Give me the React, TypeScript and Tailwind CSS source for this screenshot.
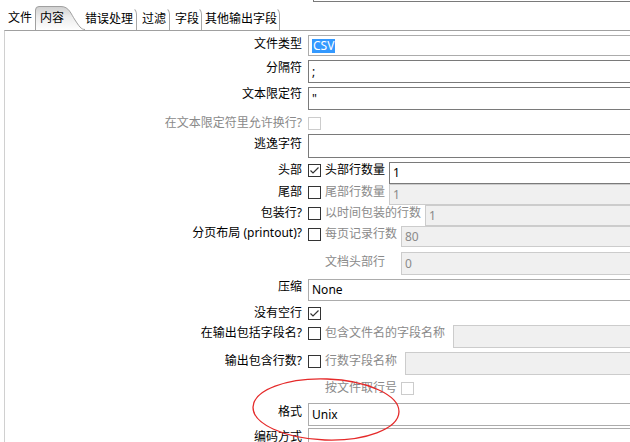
import React from 'react';

function Check({ checked, disabled }: { checked?: boolean; disabled?: boolean }) {
    return (
        <div className={`mt-[2px] h-[13px] w-[13px] shrink-0 border bg-white ${disabled ? 'border-[#cccccc]' : 'border-[#333333]'}`}>
            {checked ? (
                <svg width="11" height="11" viewBox="0 0 11 11" className="block">
                    <polyline points="1.5,5.5 4,8 9.5,2.5" fill="none" stroke="#333" strokeWidth="1.2" />
                </svg>
            ) : null}
        </div>
    );
}

function Field({ value, disabled, combo, className = '' }: { value?: React.ReactNode; disabled?: boolean; combo?: boolean; className?: string }) {
    const tone = disabled
        ? 'border-[#cccccc] bg-[#f0f0f0] text-[#8a8a8a]'
        : combo
            ? 'border-[#acacac] bg-white text-black'
            : 'border-[#7a7a7a] bg-white text-black';
    return (
        <div className={`mr-[-2px] flex h-full min-w-0 flex-1 items-center border pl-[3px] ${tone} ${className}`}>
            {value}
        </div>
    );
}

function Row({ label, lt = '', className, children }: { label?: string; lt?: string; className: string; children?: React.ReactNode }) {
    return (
        <div className={`flex items-start ${className}`}>
            <div className={`w-[297px] shrink-0 text-right leading-[16px] ${lt}`}>{label}</div>
            <div className="ml-[6px] flex h-full min-w-0 flex-1 items-start">{children}</div>
        </div>
    );
}

const tabs = [
    { name: '错误处理', cls: 'w-[52px] pl-0' },
    { name: '过滤', cls: 'w-[33px] pl-[5px]' },
    { name: '字段', cls: 'w-[32px] pl-[5px]' },
    { name: '其他输出字段', cls: 'w-[78px] pl-[3px]' },
];

export default function App() {
    return (
        <div className="relative h-[442px] w-[630px] overflow-hidden bg-white text-[12px] text-black [font-family:'Noto_Sans','Noto_Sans_CJK_SC',sans-serif]">
            {/* bottom edge of the field above */}
            <div className="h-[6px]">
                <div className="ml-[313px] h-[2px] border-b border-l border-[#7a7a7a]" />
            </div>

            {/* tabs */}
            <div className="flex h-[24px] pl-[5px]">
                <div className="flex w-[30px] items-center pl-[3px]">文件</div>
                <div className="relative flex w-[50px] items-center pl-[5px]">
                    <svg width="50" height="24" viewBox="0 0 50 24" className="absolute left-0 top-0">
                        <defs>
                            <linearGradient id="tabg" x1="0" y1="0" x2="0" y2="1">
                                <stop offset="0" stopColor="#cfcfcf" />
                                <stop offset="0.45" stopColor="#ececec" />
                                <stop offset="1" stopColor="#ffffff" />
                            </linearGradient>
                        </defs>
                        <path
                            d="M0.5,24 L0.5,4 Q0.5,0.5 4,0.5 L26,0.5 C34,0.5 36,8 40,14 C44,20 46,23.5 50,23.5"
                            fill="url(#tabg)"
                            stroke="#a0a0a0"
                        />
                    </svg>
                    <span className="relative">内容</span>
                </div>
                {tabs.map((t) => (
                    <div
                        key={t.name}
                        className={`mt-[1px] flex items-center rounded-tr-[7px] border-r border-t border-r-[#a8a8a8] border-t-transparent ${t.cls}`}
                    >
                        {t.name}
                    </div>
                ))}
            </div>

            {/* panel */}
            <div className="ml-[4px] h-[412px] border-l border-t border-l-[#d0d0d0] border-t-[#a0a0a0]">
                <Row label="文件类型" lt="pt-[1px]" className="mt-[4px] h-[21px]">
                    <Field combo value={<span className="bg-[#3399ff] px-[1px] leading-[14px] text-white">CSV</span>} />
                </Row>
                <Row label="分隔符" className="mt-[4px] h-[23px]">
                    <Field value=";" />
                </Row>
                <Row label="文本限定符" lt="-mt-[1px]" className="mt-[4px] h-[23px]">
                    <Field value={'"'} />
                </Row>
                <Row label="在文本限定符里允许换行?" lt="text-[#8a8a8a]" className="mt-[5px] h-[16px]">
                    <Check disabled />
                </Row>
                <Row label="逃逸字符" lt="pt-[2px]" className="mt-[3px] h-[24px]">
                    <Field />
                </Row>
                <Row label="头部" className="mt-[4px] h-[22px]">
                    <Check checked />
                    <span className="ml-[4px] w-[60px] shrink-0 leading-[16px]">头部行数量</span>
                    <Field value="1" className="ml-[4px]" />
                </Row>
                <Row label="尾部" className="h-[21px]">
                    <Check />
                    <span className="ml-[4px] w-[60px] shrink-0 leading-[16px] text-[#8a8a8a]">尾部行数量</span>
                    <Field disabled value="1" className="ml-[4px]" />
                </Row>
                <Row label="包装行?" className="h-[21px]">
                    <Check />
                    <span className="ml-[4px] w-[96px] shrink-0 leading-[16px] text-[#8a8a8a]">以时间包装的行数</span>
                    <Field disabled value="1" className="ml-[4px]" />
                </Row>
                <Row label="分页布局 (printout)?" lt="-mt-[1px]" className="h-[21px]">
                    <Check />
                    <span className="ml-[4px] w-[72px] shrink-0 leading-[16px] text-[#8a8a8a]">每页记录行数</span>
                    <Field disabled value="80" className="ml-[4px]" />
                </Row>
                <Row className="mt-[5px] h-[23px]">
                    <span className="ml-[17px] w-[72px] shrink-0 pt-[2px] leading-[16px] text-[#8a8a8a]">文档头部行</span>
                    <Field disabled value="0" className="ml-[4px]" />
                </Row>
                <Row label="压缩" className="mt-[4px] h-[22px]">
                    <Field combo value="None" />
                </Row>
                <Row label="没有空行" className="mt-[4px] h-[16px]">
                    <Check checked />
                </Row>
                <Row label="在输出包括字段名?" className="mt-[4px] h-[23px]">
                    <Check />
                    <span className="ml-[4px] w-[120px] shrink-0 leading-[16px] text-[#8a8a8a]">包含文件名的字段名称</span>
                    <Field disabled className="ml-[8px]" />
                </Row>
                <Row label="输出包含行数?" lt="pt-[1px]" className="mt-[4px] h-[23px]">
                    <div className="pt-[1px]">
                        <Check />
                    </div>
                    <span className="ml-[4px] w-[72px] shrink-0 pt-[1px] leading-[16px] text-[#8a8a8a]">行数字段名称</span>
                    <Field disabled className="ml-[8px]" />
                </Row>
                <Row className="mt-[5px] h-[16px]">
                    <span className="ml-[17px] w-[72px] shrink-0 leading-[16px] text-[#8a8a8a]">按文件取行号</span>
                    <div className="ml-[4px]">
                        <Check disabled />
                    </div>
                </Row>
                <Row label="格式" lt="pt-[1px]" className="mt-[7px] h-[23px]">
                    <Field combo value="Unix" />
                </Row>
                <Row label="编码方式" lt="pt-[1px]" className="mt-[2px] h-[24px]">
                    <Field combo />
                </Row>
            </div>

            {/* hand-drawn highlight */}
            <svg width="630" height="442" className="pointer-events-none absolute left-0 top-0">
                <ellipse cx="326" cy="409.5" rx="73" ry="30.5" transform="rotate(2 326 409.5)" fill="none" stroke="#e52a2a" strokeWidth="1.3" />
            </svg>
        </div>
    );
}
